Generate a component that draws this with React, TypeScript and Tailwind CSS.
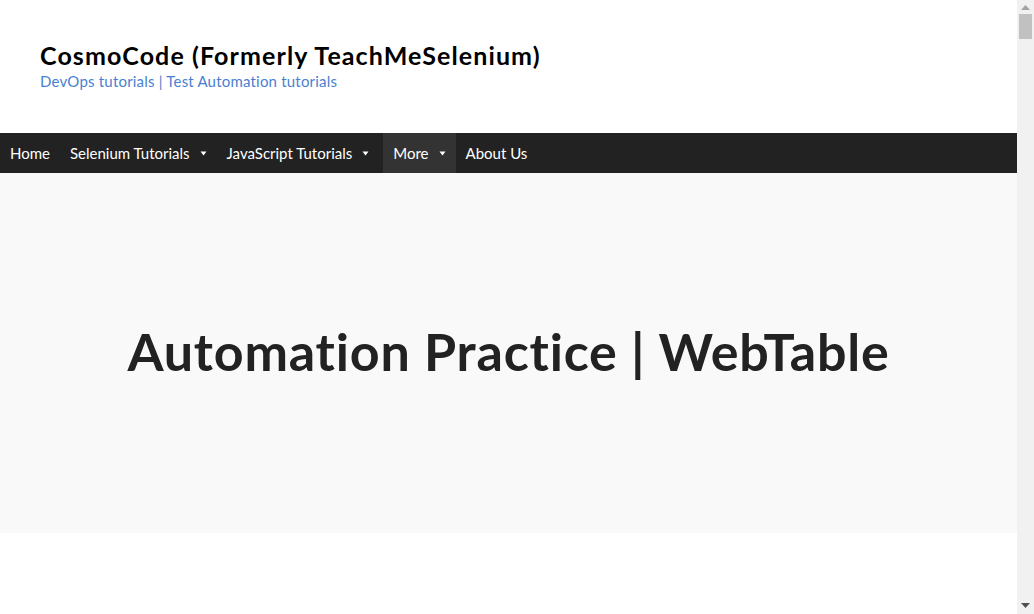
import { useState } from 'react';

const navItems = [
  { label: 'Home', dropdown: false },
  { label: 'Selenium Tutorials', dropdown: true },
  { label: 'JavaScript Tutorials', dropdown: true },
  { label: 'More', dropdown: true },
  { label: 'About Us', dropdown: false },
];

function Caret() {
  return (
    <svg width="7" height="5" viewBox="0 0 7 5" className="ml-[10px] fill-current">
      <path d="M0.5 0.5h6L3.5 4.5z" />
    </svg>
  );
}

// fake classic scrollbar, the reference shows one at the right edge
function Scrollbar() {
  return (
    <div className="flex h-screen w-[17px] shrink-0 flex-col items-center justify-between bg-[#f1f1f1] pb-[6px] pt-[5px]">
      <div className="flex w-full flex-col items-center">
        <svg width="9" height="5" viewBox="0 0 9 5" className="fill-[#a3a3a3]">
          <path d="M4.5 0L9 5H0z" />
        </svg>
        <div className="mt-[4px] h-[25px] w-[13px] bg-[#c1c1c1]" />
      </div>
      <svg width="9" height="5" viewBox="0 0 9 5" className="fill-[#505050]">
        <path d="M0 0h9L4.5 5z" />
      </svg>
    </div>
  );
}

export default function App() {
  const [active] = useState('More');

  return (
    <div className="flex h-screen overflow-hidden bg-white font-['Lato',sans-serif] text-[#222]">
      <div className="min-w-0 flex-1">
        <header className="h-[133px] px-10 pt-[39px]">
          <h1 className="text-[25px] font-bold leading-[32px] tracking-[1.1px] text-black">
            CosmoCode (Formerly TeachMeSelenium)
          </h1>
          <p className="text-[15px] leading-[20px] tracking-[0.2px] text-[#4a7fd0]">
            DevOps tutorials | Test Automation tutorials
          </p>
        </header>

        <nav className="flex h-10 bg-[#222] text-[15px] text-white">
          {navItems.map((item) => (
            <a
              key={item.label}
              href="#"
              className={`flex items-center px-[10px] ${
                item.label === active ? 'ml-[4px] bg-[#333]' : ''
              }`}
            >
              {item.label}
              {item.dropdown && <Caret />}
            </a>
          ))}
        </nav>

        <section className="flex h-[360px] items-center justify-center bg-[#f9f9f9] pb-[4px]">
          <h2 className="text-[52px] font-bold leading-none tracking-[0.8px] text-[#222]">
            Automation Practice | WebTable
          </h2>
        </section>
      </div>
      <Scrollbar />
    </div>
  );
}
